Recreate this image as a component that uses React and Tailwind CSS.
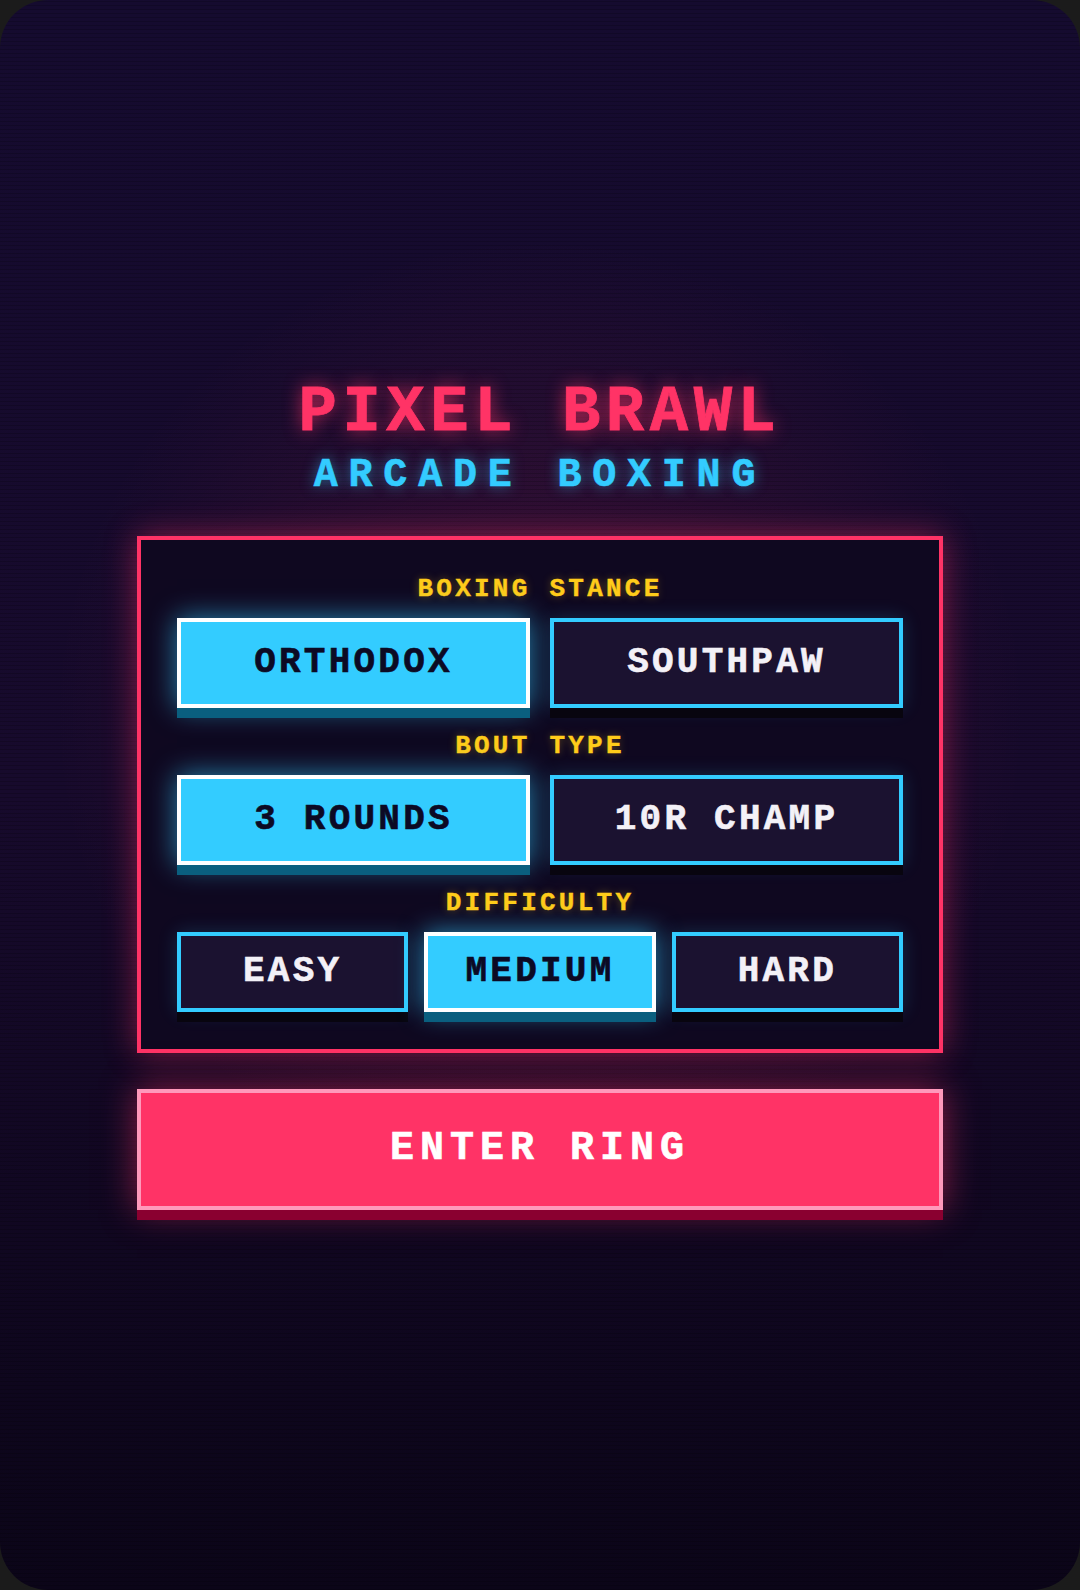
import React, { useState } from 'react';

const mono = "font-['Liberation_Mono','DejaVu_Sans_Mono',monospace]";

function Option({ label, active, onClick, tall = true }) {
    return (
        <button
            type="button"
            onClick={onClick}
            className={`flex-1 flex items-center justify-center border-4 text-[36px] font-bold leading-none tracking-[0.09em] [-webkit-text-stroke:0.6px_currentColor] ${tall ? 'h-[90px]' : 'h-[80px]'} ${
                active
                    ? 'bg-[#33ccff] border-white text-[#0c0a24] shadow-[0_10px_0_#0a5f7f,0_0_26px_rgba(51,204,255,0.65)]'
                    : 'bg-[#1b1230] border-[#33ccff] text-[#f3f1f7] shadow-[0_10px_0_#08050f,0_0_18px_rgba(51,204,255,0.18)]'
            }`}
        >
            {label}
        </button>
    );
}

function Section({ title, children }) {
    return (
        <div className="flex flex-col items-center gap-4">
            <h2 className="text-[26px] font-bold leading-[26px] tracking-[0.125em] text-[#ffcc1a] [-webkit-text-stroke:0.4px_currentColor] [text-shadow:0_0_8px_rgba(255,204,26,0.35)]">
                {title}
            </h2>
            {children}
        </div>
    );
}

export default function App() {
    const [stance, setStance] = useState('orthodox');
    const [bout, setBout] = useState('3r');
    const [level, setLevel] = useState('medium');

    return (
        <div className={`w-[1080px] h-[1590px] bg-[#1b1b1b] ${mono}`}>
            <div className="relative w-full h-full rounded-[48px] overflow-hidden bg-gradient-to-b from-[#150b2f] via-[#170a2c] to-[#0b0518] flex flex-col items-center justify-center">
                {/* glow + scanlines */}
                <div className="absolute inset-0 pointer-events-none bg-[radial-gradient(ellipse_60%_40%_at_50%_45%,rgba(255,51,102,0.17),transparent_75%)]" />
                <div className="absolute inset-0 pointer-events-none bg-[repeating-linear-gradient(0deg,rgba(0,0,0,0.18)_0px,rgba(0,0,0,0.18)_1px,transparent_1px,transparent_4px)]" />

                <h1 className="relative text-[64px] font-bold leading-none tracking-[0.086em] text-[#ff3366] [-webkit-text-stroke:0.8px_currentColor] [text-shadow:0_0_18px_rgba(255,51,102,0.7)]">
                    PIXEL BRAWL
                </h1>
                <p className="relative mt-[11px] text-[40px] font-bold leading-none tracking-[0.27em] text-[#33ccff] [-webkit-text-stroke:0.6px_currentColor] [text-shadow:0_0_14px_rgba(51,204,255,0.55)]">
                    ARCADE BOXING
                </p>

                <div className="relative mt-[40px] w-[806px] border-4 border-[#ff3366] bg-[#0f0820] px-9 pt-9 pb-[37px] flex flex-col gap-[25px] shadow-[0_0_30px_rgba(255,51,102,0.45)]">
                    <Section title="BOXING STANCE">
                        <div className="w-full flex gap-5">
                            <Option label="ORTHODOX" active={stance === 'orthodox'} onClick={() => setStance('orthodox')} />
                            <Option label="SOUTHPAW" active={stance === 'southpaw'} onClick={() => setStance('southpaw')} />
                        </div>
                    </Section>
                    <Section title="BOUT TYPE">
                        <div className="w-full flex gap-5">
                            <Option label="3 ROUNDS" active={bout === '3r'} onClick={() => setBout('3r')} />
                            <Option label="10R CHAMP" active={bout === '10r'} onClick={() => setBout('10r')} />
                        </div>
                    </Section>
                    <Section title="DIFFICULTY">
                        <div className="w-full flex gap-4">
                            <Option tall={false} label="EASY" active={level === 'easy'} onClick={() => setLevel('easy')} />
                            <Option tall={false} label="MEDIUM" active={level === 'medium'} onClick={() => setLevel('medium')} />
                            <Option tall={false} label="HARD" active={level === 'hard'} onClick={() => setLevel('hard')} />
                        </div>
                    </Section>
                </div>

                <button
                    type="button"
                    className="relative mt-[36px] w-[806px] h-[121px] flex items-center justify-center border-4 border-[#ff99bb] bg-[#ff3366] text-white text-[40px] font-bold leading-none tracking-[0.15em] [-webkit-text-stroke:0.6px_currentColor] shadow-[0_10px_0_#8a0030,0_0_32px_rgba(255,51,102,0.5)]"
                >
                    ENTER RING
                </button>
            </div>
        </div>
    );
}
